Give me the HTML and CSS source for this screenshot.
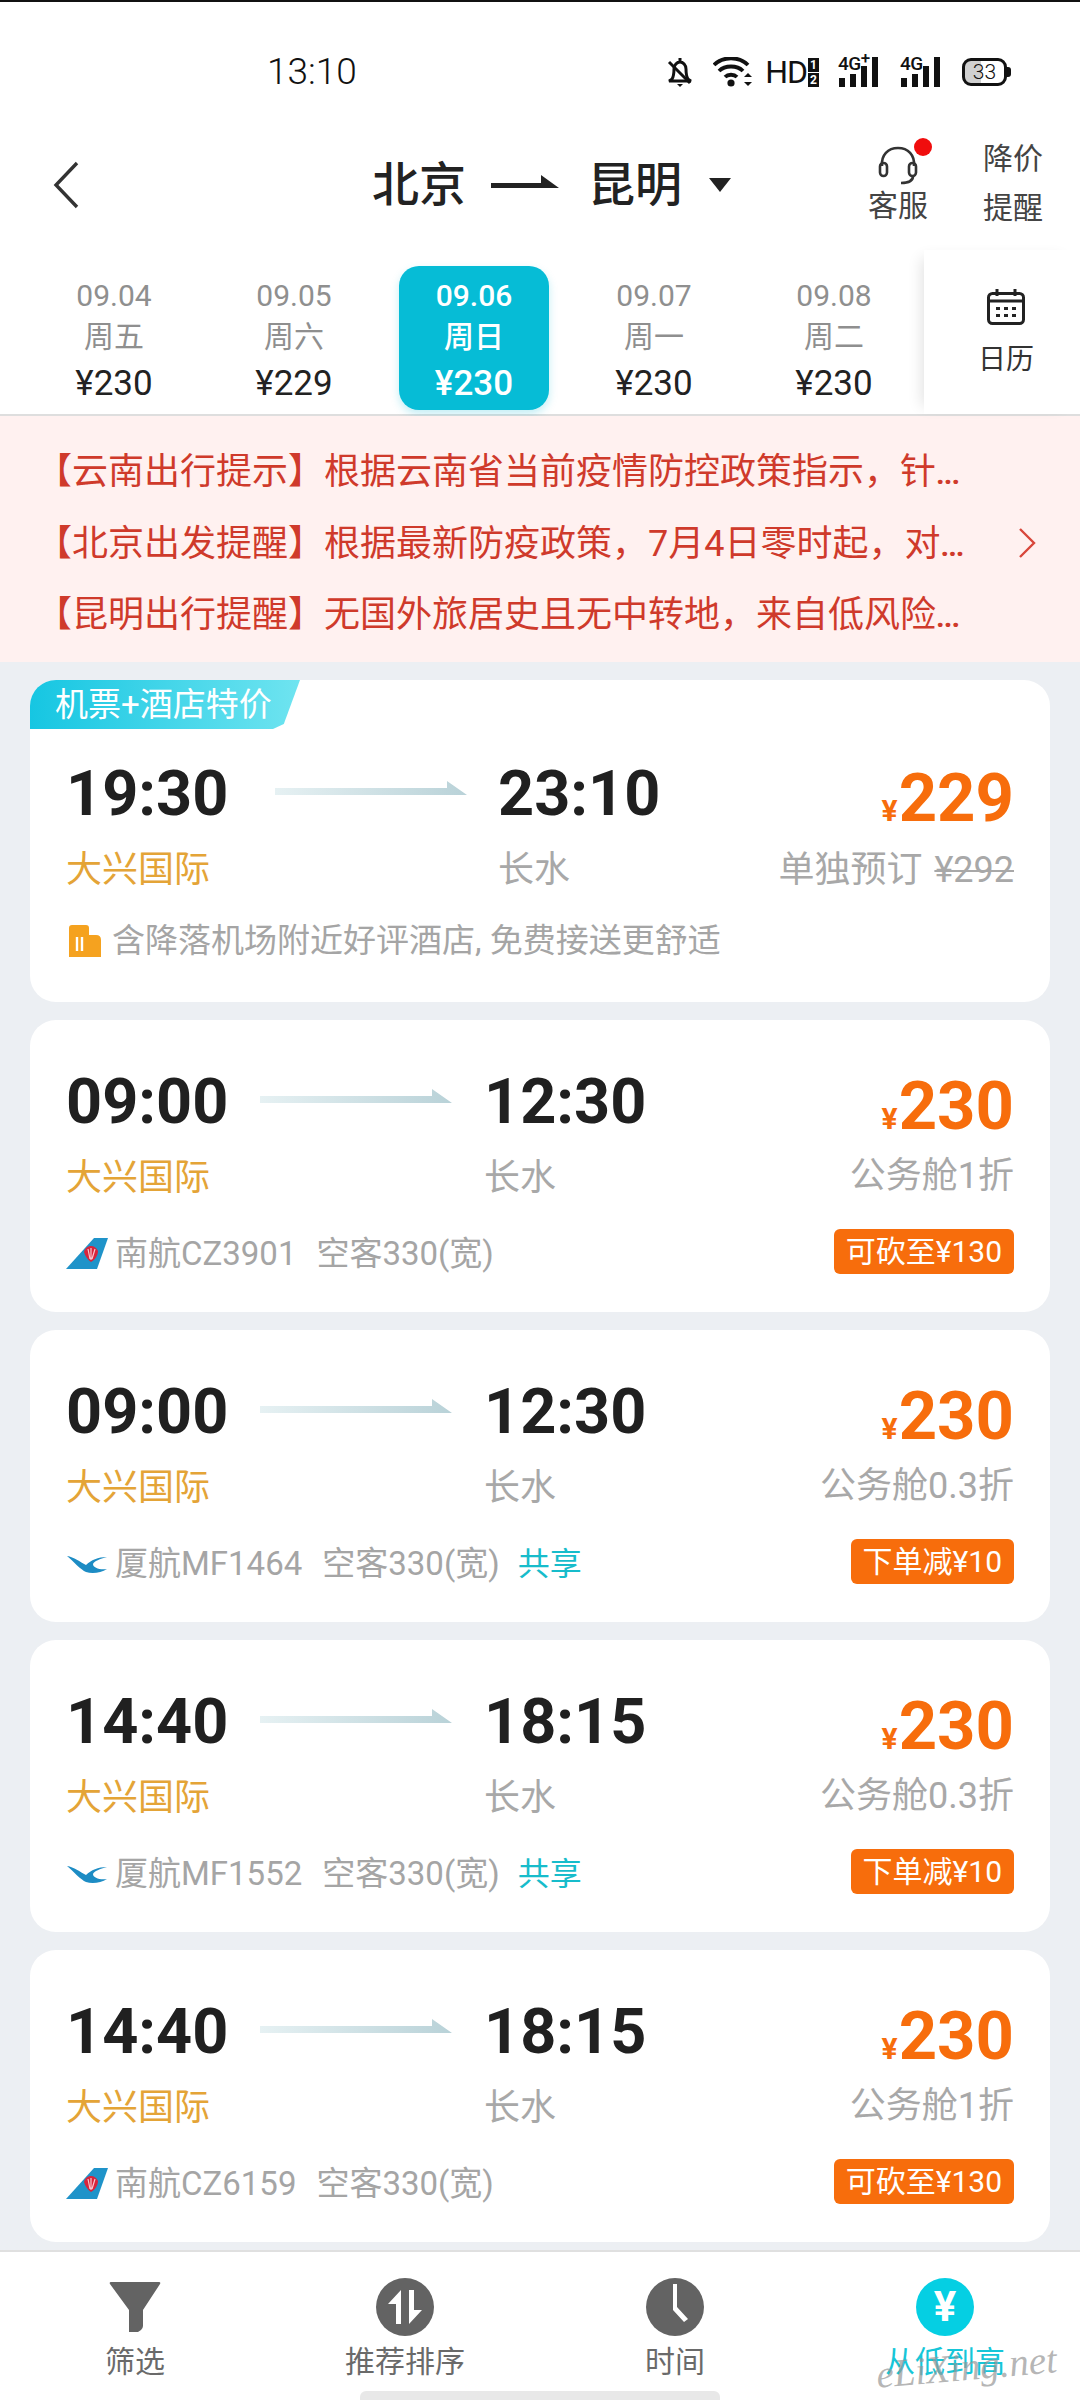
FILE: index.html
```html
<!DOCTYPE html>
<html lang="zh-CN">
<head>
<meta charset="utf-8">
<title>北京 昆明</title>
<link rel="stylesheet" href="styles.css">
</head>
<body>
<svg class="defs" width="0" height="0" aria-hidden="true">
  <defs>
    <symbol id="cz" viewBox="0 0 42 32">
      <path d="M28 0H42L31 31H0Z" fill="#1f93c9"/>
      <path d="M18 14c1-4 4-6 7-6s6 2 7 5c0 4-3 9-7 11-3-2-6-6-7-10Z" fill="#d8243c"/>
      <path d="M22 11l2 10M25 10v12M29 11l-3 10" stroke="#f6c7cf" stroke-width="1.2" fill="none"/>
    </symbol>
    <symbol id="mf" viewBox="0 0 42 32">
      <path d="M1 8C8 9 14 14 20 17 25 12 32 9 41 9 34 11 28 13 27 16 27 20 34 22 41 21 35 25 26 26 20 24 15 22 7 13 1 8Z" fill="#1d8cc4"/>
    </symbol>
  </defs>
</svg>
<div class="page">
  <div class="status">
    <span class="clock">13:10</span>
    <div class="status-icons">
      <svg class="ic-bell" width="28" height="30" viewBox="0 0 28 30"><path d="M14 1v3M6 22c2-3 2-6 2-10 0-4 3-7 6-7s6 3 6 7c0 4 0 7 2 10 1 1 3 2 3 2H3s2-1 3-2Z" fill="none" stroke="#111" stroke-width="3"/><path d="M3 5l21 21" stroke="#111" stroke-width="3"/><path d="M11 27h6l-3 3Z" fill="#111"/></svg>
      <svg class="ic-wifi" width="40" height="30" viewBox="0 0 40 30"><path d="M1 8c9-9 25-9 34 0M6 14c6-6 18-6 24 0M12 20c3-3 9-3 12 0" fill="none" stroke="#111" stroke-width="3.8"/><circle cx="18" cy="26" r="3.6" fill="#111"/><path d="M31 20l4-4 4 4ZM31 25l4 4 4-4Z" fill="#111"/></svg>
      <span class="hd">HD</span>
      <span class="sim"><span class="sim-n">1</span><span class="sim-n">2</span></span>
      <div class="net net-a">
        <span class="net-t">4G<sup class="net-p">+</sup></span>
        <svg class="net-bars" width="42" height="30" viewBox="0 0 42 30"><path d="M1 21h6v9H1ZM12 17h6v13h-6ZM23 9h6v21h-6ZM34 0h6v30h-6Z" fill="#111"/></svg>
      </div>
      <div class="net net-b">
        <span class="net-t">4G</span>
        <svg class="net-bars" width="42" height="30" viewBox="0 0 42 30"><path d="M1 21h6v9H1ZM12 17h6v13h-6ZM23 9h6v21h-6ZM34 0h6v30h-6Z" fill="#111"/></svg>
      </div>
      <div class="battery"><span class="battery-n">33</span></div>
    </div>
  </div>

  <header class="head">
    <svg class="back" width="28" height="48" viewBox="0 0 28 48"><path d="M25 2 4 24l21 22" fill="none" stroke="#333" stroke-width="3.4"/></svg>
    <div class="title">
      <span>北京</span>
      <svg class="title-arrow" width="68" height="20" viewBox="0 0 68 20"><path d="M0 8h50V0l18 13H0Z" fill="#222"/></svg>
      <span>昆明</span>
      <i class="caret"></i>
    </div>
    <div class="service">
      <svg class="headset" width="42" height="40" viewBox="0 0 42 40"><path d="M5 20C4 9 11 2 21 2s17 7 16 18" fill="none" stroke="#333" stroke-width="2.6"/><rect x="3" y="17" width="7" height="13" rx="3.5" fill="none" stroke="#333" stroke-width="2.6"/><rect x="32" y="17" width="7" height="13" rx="3.5" fill="none" stroke="#333" stroke-width="2.6"/><path d="M36 30c0 5-5 7-12 7" fill="none" stroke="#333" stroke-width="2.6"/></svg>
      <i class="dot"></i>
      <span class="service-t">客服</span>
    </div>
    <div class="alert"><span>降价</span><span>提醒</span></div>
  </header>

  <div class="dates">
    <div class="date-list">
      <div class="date"><span class="d-day">09.04</span><span class="d-week">周五</span><span class="d-price">¥230</span></div>
      <div class="date"><span class="d-day">09.05</span><span class="d-week">周六</span><span class="d-price">¥229</span></div>
      <div class="date date-on"><span class="d-day">09.06</span><span class="d-week">周日</span><span class="d-price">¥230</span></div>
      <div class="date"><span class="d-day">09.07</span><span class="d-week">周一</span><span class="d-price">¥230</span></div>
      <div class="date"><span class="d-day">09.08</span><span class="d-week">周二</span><span class="d-price">¥230</span></div>
    </div>
    <div class="calendar">
      <svg class="cal-ic" width="38" height="36" viewBox="0 0 38 36"><rect x="1.5" y="4.5" width="35" height="30" rx="4" fill="none" stroke="#222" stroke-width="3"/><path d="M2 12h34" stroke="#222" stroke-width="3"/><path d="M10 0v7M28 0v7" stroke="#222" stroke-width="3"/><path d="M9 18h4v3H9ZM17 18h4v3h-4ZM25 18h4v3h-4ZM9 25h4v3H9ZM17 25h4v3h-4ZM25 25h4v3h-4Z" fill="#222"/></svg>
      <span class="cal-t">日历</span>
    </div>
  </div>

  <div class="notice">
    <div class="notice-lines">
      <p class="notice-line">【云南出行提示】根据云南省当前疫情防控政策指示，针<span class="dots">...</span></p>
      <p class="notice-line">【北京出发提醒】根据最新防疫政策，7月4日零时起，对<span class="dots">...</span></p>
      <p class="notice-line">【昆明出行提醒】无国外旅居史且无中转地，来自低风险<span class="dots">...</span></p>
    </div>
    <svg class="notice-go" width="18" height="30" viewBox="0 0 18 30"><path d="M2 1l14 14L2 29" fill="none" stroke="#d8473b" stroke-width="2.4"/></svg>
  </div>

  <main class="list">
    <article class="card card-pack">
      <div class="pack-tag">机票+酒店特价</div>
      <span class="time">19:30</span><i class="arrow"></i><span class="time">23:10</span>
      <div class="price"><small>¥</small>229</div>
      <span class="air air-dep">大兴国际</span><span class="air air-arr">长水</span>
      <div class="sub">单独预订 <s>¥292</s></div>
      <div class="foot foot-wide">
        <svg class="hotel" width="32" height="32" viewBox="0 0 32 32"><path d="M0 3q0-3 3-3h14q3 0 3 3v7h7q5 0 5 5v17H0Z" fill="#f5a21f"/><path d="M8 12v14M13 12v14" stroke="#fff" stroke-width="2.4"/></svg>
        <span class="flight">含降落机场附近好评酒店, 免费接送更舒适</span>
      </div>
    </article>

    <article class="card">
      <span class="time">09:00</span><i class="arrow"></i><span class="time">12:30</span>
      <div class="price"><small>¥</small>230</div>
      <span class="air air-dep">大兴国际</span><span class="air air-arr">长水</span>
      <div class="sub">公务舱1折</div>
      <div class="foot">
        <svg class="logo"><use href="#cz"/></svg>
        <span class="flight">南航CZ3901</span><span class="flight plane">空客330(宽)</span>
        <span class="tag">可砍至¥130</span>
      </div>
    </article>

    <article class="card">
      <span class="time">09:00</span><i class="arrow"></i><span class="time">12:30</span>
      <div class="price"><small>¥</small>230</div>
      <span class="air air-dep">大兴国际</span><span class="air air-arr">长水</span>
      <div class="sub">公务舱0.3折</div>
      <div class="foot">
        <svg class="logo"><use href="#mf"/></svg>
        <span class="flight">厦航MF1464</span><span class="flight plane">空客330(宽)</span><span class="share">共享</span>
        <span class="tag">下单减¥10</span>
      </div>
    </article>

    <article class="card">
      <span class="time">14:40</span><i class="arrow"></i><span class="time">18:15</span>
      <div class="price"><small>¥</small>230</div>
      <span class="air air-dep">大兴国际</span><span class="air air-arr">长水</span>
      <div class="sub">公务舱0.3折</div>
      <div class="foot">
        <svg class="logo"><use href="#mf"/></svg>
        <span class="flight">厦航MF1552</span><span class="flight plane">空客330(宽)</span><span class="share">共享</span>
        <span class="tag">下单减¥10</span>
      </div>
    </article>

    <article class="card">
      <span class="time">14:40</span><i class="arrow"></i><span class="time">18:15</span>
      <div class="price"><small>¥</small>230</div>
      <span class="air air-dep">大兴国际</span><span class="air air-arr">长水</span>
      <div class="sub">公务舱1折</div>
      <div class="foot">
        <svg class="logo"><use href="#cz"/></svg>
        <span class="flight">南航CZ6159</span><span class="flight plane">空客330(宽)</span>
        <span class="tag">可砍至¥130</span>
      </div>
    </article>
  </main>

  <nav class="nav">
    <div class="nav-item">
      <span class="nav-ic"><svg width="58" height="58" viewBox="0 0 58 58"><path d="M4 6q-1-2 1-2h48q2 0 1 2L37 32v16q0 2-2 4l-3 2h-9V32Z" fill="#636363"/></svg></span>
      <span class="nav-t">筛选</span>
    </div>
    <div class="nav-item">
      <span class="nav-ic"><svg width="58" height="58" viewBox="0 0 58 58"><circle cx="29" cy="29" r="29" fill="#636363"/><path d="M25 12v34h-5V26h-8ZM33 46V12h5v20h8Z" fill="#fff"/></svg></span>
      <span class="nav-t">推荐排序</span>
    </div>
    <div class="nav-item">
      <span class="nav-ic"><svg width="58" height="58" viewBox="0 0 58 58"><circle cx="29" cy="29" r="29" fill="#636363"/><path d="M27 6h4v23l11 12-4 3-11-12Z" fill="#fff"/></svg></span>
      <span class="nav-t">时间</span>
    </div>
    <div class="nav-item nav-on">
      <span class="nav-ic nav-yen">¥</span>
      <span class="nav-t">从低到高</span>
    </div>
    <span class="mark">eLiXing.net</span>
  </nav>
  <i class="home"></i>
</div>
</body>
</html>
```
FILE: styles.css
```css
* { box-sizing: border-box; }
html, body { margin: 0; padding: 0; }
body {
  width: 1080px;
  height: 2400px;
  overflow: hidden;
  font-family: Roboto, "Noto Sans CJK SC", sans-serif;
  color: #222;
  background: #fff;
}
i { font-style: normal; display: block; }
.defs { position: absolute; }
.page {
  position: relative;
  width: 1080px;
  height: 2400px;
  display: flex;
  flex-direction: column;
  background: #eceff3;
}

/* status bar */
.status {
  height: 120px;
  flex: none;
  background: #fff;
  border-top: 2px solid #111;
  padding: 40px 73px 0 267px;
  display: flex;
  align-items: flex-start;
  justify-content: space-between;
}
.clock { font-size: 37px; font-weight: 300; line-height: 60px; color: #111; }
.status-icons { display: flex; align-items: center; height: 60px; }
.ic-bell { margin-right: 19px; }
.ic-wifi { margin-right: 12px; }
.hd { font-size: 32px; line-height: 30px; color: #111; letter-spacing: -1px; }
.sim { display: flex; flex-direction: column; gap: 1px; margin: 0 19px 0 1px; }
.sim-n { width: 11px; height: 14px; background: #111; color: #fff; font-size: 12px; line-height: 14px; text-align: center; font-weight: 700; }
.net { position: relative; width: 42px; height: 30px; }
.net-a { margin-right: 20px; }
.net-b { margin-right: 20px; }
.net-t { position: absolute; left: 0; top: -2px; font-size: 19px; line-height: 18px; color: #111; font-weight: 500; letter-spacing: -.5px; }
.net-p { position: absolute; top: -3px; font-size: 17px; line-height: 12px; }
.net-bars { display: block; }
.battery {
  position: relative;
  width: 45px;
  height: 28px;
  border: 3px solid #111;
  border-radius: 9px;
  background: linear-gradient(90deg, #d0d0d0 42%, #fff 42%);
  text-align: center;
}
.battery::after {
  content: "";
  position: absolute;
  right: -7px;
  top: 6px;
  width: 4px;
  height: 10px;
  background: #111;
  border-radius: 0 3px 3px 0;
}
.battery-n { font-size: 21px; line-height: 22px; display: block; font-weight: 300; color: #111; }

/* header */
.head {
  height: 130px;
  flex: none;
  background: #fff;
  display: flex;
  align-items: flex-start;
  padding-left: 52px;
}
.back { margin-top: 41px; flex: none; }
.title {
  width: 788px;
  flex: none;
  padding-left: 292px;
  margin-top: 35px;
  display: flex;
  align-items: center;
  font-size: 47px;
  font-weight: 500;
  line-height: 60px;
  color: #222;
  white-space: nowrap;
}
.title-arrow { margin: 0 29px 0 25px; }
.caret {
  width: 0;
  height: 0;
  margin-left: 27px;
  border-left: 11px solid transparent;
  border-right: 11px solid transparent;
  border-top: 14px solid #222;
}
.service { position: relative; width: 60px; margin-top: 26px; text-align: center; flex: none; }
.headset { display: block; margin: 0 auto; }
.dot { position: absolute; right: -4px; top: -8px; width: 18px; height: 18px; border-radius: 50%; background: #f00d0d; }
.service-t { display: block; font-size: 30px; line-height: 40px; color: #444; }
.alert { display: flex; flex-direction: column; flex: none; margin-left: 55px; margin-top: 14px; font-size: 30px; line-height: 49px; color: #444; }

/* date strip */
.dates {
  height: 166px;
  flex: none;
  display: flex;
  background: #fff;
  border-bottom: 2px solid #dedede;
}
.date-list { width: 924px; flex: none; display: flex; padding: 16px 0 0 24px; }
.date {
  width: 180px;
  height: 144px;
  flex: none;
  display: flex;
  flex-direction: column;
  align-items: center;
  color: #8f8f8f;
}
.d-day { font-size: 30px; line-height: 30px; margin-top: 15px; }
.d-week { font-size: 30px; line-height: 40px; margin-top: 6px; }
.d-price { font-size: 35px; line-height: 40px; margin-top: 7px; color: #222; }
.date-on {
  width: 150px;
  margin: 0 15px;
  border-radius: 20px;
  background: #06bcd6;
  color: #fff;
  box-shadow: 0 4px 8px rgba(11, 188, 214, .25);
}
.date-on .d-price { color: #fff; font-weight: 500; }
.date-on .d-day, .date-on .d-week { color: #fff; font-weight: 500; }
.calendar {
  width: 156px;
  flex: none;
  display: flex;
  flex-direction: column;
  align-items: center;
  padding: 39px 0 0 8px;
  box-shadow: -10px 0 14px -8px rgba(0, 0, 0, .12);
  position: relative;
}
.cal-ic { display: block; }
.cal-t { font-size: 28px; line-height: 40px; margin-top: 15px; color: #333; }

/* notice */
.notice {
  height: 246px;
  flex: none;
  background: #fff1f0;
  padding: 21px 44px 0 36px;
  display: flex;
  justify-content: space-between;
  align-items: flex-start;
}
.notice-line {
  margin: 0;
  height: 71.5px;
  line-height: 71.5px;
  font-size: 36px;
  color: #cf3a2b;
  white-space: nowrap;
}
.dots { letter-spacing: -1px; font-size: 30px; font-weight: 700; }
.notice-go { margin-top: 91px; }

/* flight list */
.list {
  flex: 1;
  min-height: 0;
  overflow: hidden;
  padding: 18px 30px 0;
  display: flex;
  flex-direction: column;
  gap: 18px;
}
.card {
  position: relative;
  flex: none;
  height: 292px;
  border-radius: 26px;
  background: #fff;
  padding: 40px 36px 0;
  display: grid;
  grid-template-columns: 194px 192px 32px 1fr;
  grid-template-rows: 80px 70px 82px;
  align-items: center;
}
.card-pack {
  height: 322px;
  padding-top: 72px;
  grid-template-columns: 209px 192px 31px 1fr;
  grid-template-rows: 80px 70px 76px;
}
.pack-tag {
  position: absolute;
  left: 0;
  top: 0;
  width: 270px;
  height: 49px;
  padding-left: 25px;
  border-radius: 26px 0 0 0;
  background: linear-gradient(90deg, #16c6e2, #6fe4f0);
  clip-path: polygon(0 0, 100% 0, 94% 90%, 90% 100%, 0 100%);
  font-size: 33px;
  line-height: 50px;
  color: #fff;
  white-space: nowrap;
}
.time { font-size: 63px; font-weight: 700; line-height: 80px; padding-top: 4px; color: #202020; white-space: nowrap; }
.arrow {
  grid-column: 2;
  height: 14px;
  margin-bottom: 8px;
  background: linear-gradient(90deg, #e6f1f3, #b9d2d8);
  clip-path: polygon(0 7px, 172px 7px, 172px 0, 192px 14px, 0 14px);
}
.card > .time { grid-row: 1; grid-column: 1; }
.card > .time:nth-of-type(2) { grid-column: 4; justify-self: start; }
.card > .arrow { grid-row: 1; }
.price {
  grid-column: 4;
  grid-row: 1;
  justify-self: end;
  padding-top: 24px;
  font-size: 67px;
  font-weight: 700;
  line-height: 70px;
  color: #f76d0c;
  white-space: nowrap;
}
.price small { font-size: 30px; font-weight: 700; margin-right: 1px; }
.air { font-size: 36px; line-height: 50px; padding-top: 5px; grid-row: 2; white-space: nowrap; }
.air-dep { grid-column: 1; color: #e4a437; }
.air-arr { grid-column: 4; color: #a8a8a8; justify-self: start; }
.sub { grid-column: 4; grid-row: 2; justify-self: end; font-size: 36px; line-height: 50px; padding-top: 2px; color: #a8a8a8; white-space: nowrap; }
.card-pack .sub { padding-top: 6px; word-spacing: 3px; }
.sub s { text-decoration-thickness: 2px; }
.foot {
  grid-column: 1 / -1;
  grid-row: 3;
  display: flex;
  align-items: center;
  padding-top: 6px;
}
.foot-wide { padding-top: 2px; }
.logo { width: 42px; height: 32px; flex: none; margin-right: 7px; }
.hotel { flex: none; margin: 0 11px 0 3px; }
.flight { font-size: 33px; line-height: 50px; color: #a5a5a5; white-space: nowrap; }
.plane { margin-left: 20px; }
.share { margin-left: 18px; font-size: 32px; line-height: 50px; color: #17bccb; }
.tag {
  margin-left: auto;
  height: 45px;
  padding: 0 12px;
  border-radius: 6px;
  background: #f76d0c;
  color: #fff;
  font-size: 30px;
  line-height: 45px;
  white-space: nowrap;
  margin-top: -5px;
}

/* bottom nav */
.nav {
  position: relative;
  height: 150px;
  flex: none;
  background: #fff;
  border-top: 2px solid #e0e0e0;
  display: grid;
  grid-template-columns: repeat(4, 270px);
  justify-items: center;
  padding-top: 26px;
}
.nav-item { display: flex; flex-direction: column; align-items: center; color: #6a6a6a; }
.nav-ic { width: 58px; height: 58px; display: block; }
.nav-ic svg { display: block; }
.nav-t { font-size: 30px; line-height: 40px; margin-top: 6px; white-space: nowrap; }
.nav-on { color: #16c6d8; }
.nav-yen {
  border-radius: 50%;
  background: #05cfe3;
  color: #fff;
  text-align: center;
  font-size: 42px;
  font-weight: 700;
  line-height: 58px;
}
.mark {
  position: absolute;
  left: 876px;
  top: 92px;
  font-family: "Liberation Serif", serif;
  font-style: italic;
  font-size: 39px;
  line-height: 46px;
  color: rgba(150, 150, 150, .7);
  transform: rotate(-5deg);
  white-space: nowrap;
}
.home {
  position: absolute;
  left: 360px;
  bottom: 0;
  width: 360px;
  height: 9px;
  border-radius: 6px 6px 0 0;
  background: #e8e8e8;
}
```
